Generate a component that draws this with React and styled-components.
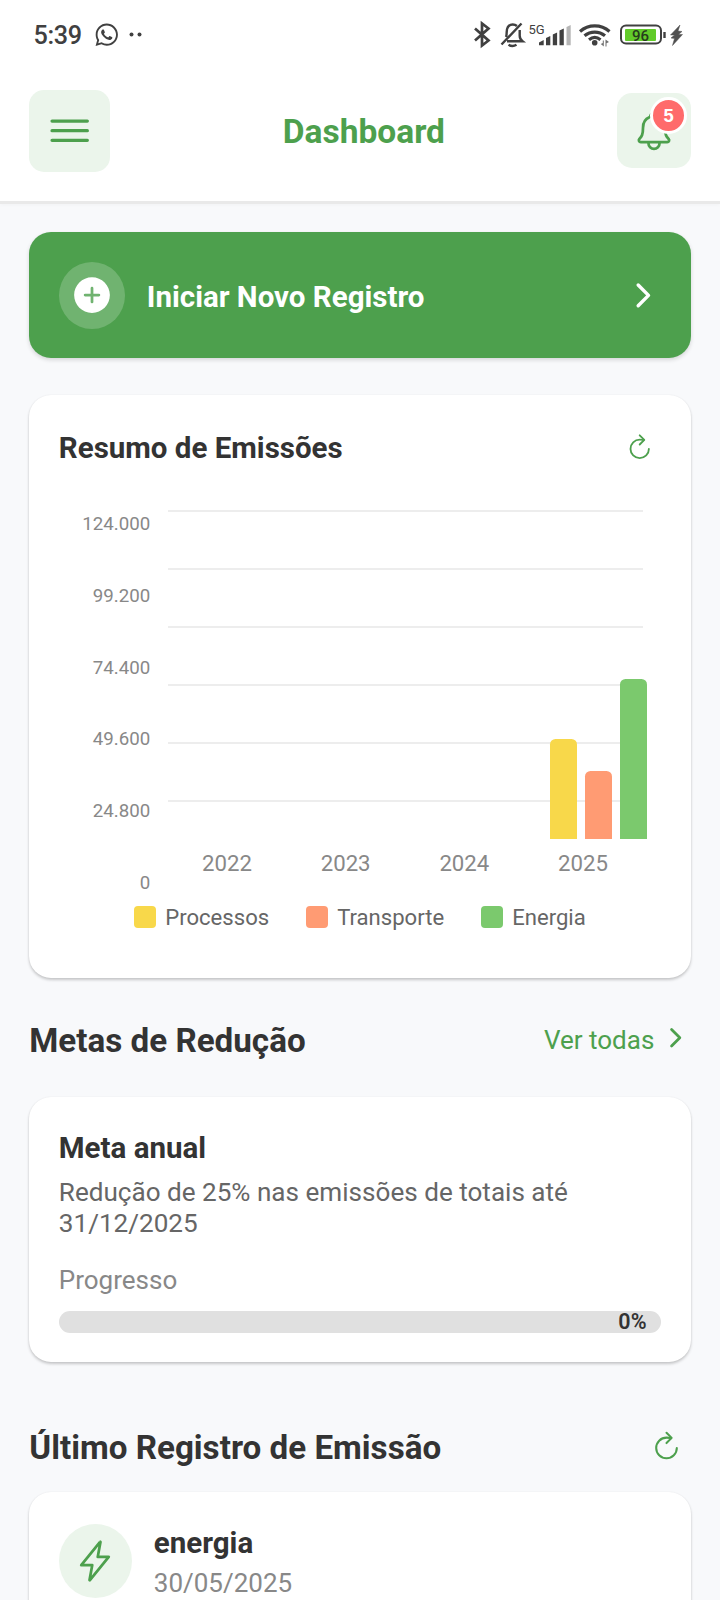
import React from "react";
import styled, { createGlobalStyle } from "styled-components";
import {
  IoMenuOutline,
  IoNotificationsOutline,
  IoAddCircle,
  IoChevronForward,
  IoRefreshOutline,
  IoFlashOutline,
} from "react-icons/io5";
import { FaWhatsapp } from "react-icons/fa";

const GREEN = "#4da04d";
const MINT = "#ebf5eb";

const GlobalStyle = createGlobalStyle`
  * { box-sizing: border-box; }
  body {
    margin: 0;
    background: #f8f9fb;
    font-family: Roboto, "Liberation Sans", sans-serif;
    color: #333;
  }
  svg { display: block; flex: none; }
  h1, h2, h3, p { margin: 0; }
`;

const Screen = styled.div`
  width: 720px;
  height: 1600px;
  overflow: hidden;
  background: #f8f9fb;
`;

const TopArea = styled.div`
  height: 204px;
  background: #fff;
  border-bottom: 3px solid #e9e9e9;
  box-shadow: 0 1px 4px rgba(0, 0, 0, 0.03);
`;

const StatusBar = styled.div`
  display: flex;
  justify-content: space-between;
  height: 70px;
  padding: 0 36px 0 33.5px;
  color: #404040;
`;

const StatusGroup = styled.div`
  display: flex;
  align-items: center;
  height: 70px;
`;

const Clock = styled.span`
  width: 60px;
  font-size: 25.2px;
  font-weight: 500;
  line-height: 70px;
  letter-spacing: -0.3px;
  padding-top: 2px;
`;

const Dots = styled.svg`
  margin-left: 10px;
`;

const Header = styled.header`
  display: flex;
  justify-content: space-between;
  align-items: center;
  height: 121px;
  padding: 0 29.5px 0 29.3px;
`;

const SoftButton = styled.button`
  position: relative;
  display: flex;
  align-items: center;
  justify-content: center;
  width: ${(p) => p.$w}px;
  height: ${(p) => p.$h}px;
  padding: 0;
  border: 0;
  border-radius: 15px;
  background: ${MINT};
  color: ${GREEN};
`;

const Badge = styled.span`
  position: absolute;
  top: 4px;
  right: 3.5px;
  width: 37px;
  height: 37px;
  border: 3.7px solid #fff;
  border-radius: 50%;
  background: #ff6b6b;
  color: #fff;
  font-size: 18.4px;
  font-weight: 700;
  line-height: 31px;
  text-align: center;
`;

const ScreenTitle = styled.h1`
  padding: 3px 0 0 1px;
  font-size: 33.5px;
  line-height: 40px;
  font-weight: 700;
  color: ${GREEN};
`;

const Content = styled.main`
  padding: 28px 29.3px 0;
`;

const NewRecord = styled.button`
  display: flex;
  align-items: center;
  width: 661.4px;
  height: 126px;
  padding: 0 29.5px;
  border: 0;
  border-radius: 22px;
  background: ${GREEN};
  color: #fff;
  font-family: inherit;
  text-align: left;
  box-shadow: 0 2px 4px rgba(0, 0, 0, 0.14);
`;

const NewRecordIcon = styled.span`
  display: flex;
  align-items: center;
  justify-content: center;
  width: 66px;
  height: 67px;
  border-radius: 50%;
  background: rgba(255, 255, 255, 0.2);
`;

const NewRecordLabel = styled.span`
  flex: 1;
  padding: 3px 0 0 22px;
  font-size: 29.5px;
  line-height: 36px;
  font-weight: 700;
`;

const Card = styled.section`
  height: ${(p) => p.$h}px;
  margin-top: ${(p) => p.$top}px;
  padding: ${(p) => p.$pad}px 29.5px 0;
  border-radius: 22px;
  background: #fff;
  box-shadow: 0 2px 3px rgba(0, 0, 0, 0.2), 0 0 2px rgba(0, 0, 0, 0.06);
`;

const CardHeader = styled.div`
  display: flex;
  justify-content: space-between;
  align-items: center;
  height: 40px;
  padding-right: 7px;
  color: ${GREEN};
`;

const CardTitle = styled.h3`
  padding-top: ${(p) => p.$drop || 0}px;
  font-size: 29.5px;
  line-height: 36px;
  font-weight: 700;
  color: #333;
`;

const Chart = styled.div`
  display: flex;
  height: 387px;
  margin-top: 43px;
`;

const YAxis = styled.div`
  display: flex;
  flex-direction: column;
  justify-content: space-between;
  width: 91.5px;
  height: 384px;
  padding-top: 3px;
  font-size: 18.7px;
  line-height: 22px;
  text-align: right;
  color: #888;
`;

const PlotColumn = styled.div`
  width: 478px;
  margin-left: 18px;
`;

const Plot = styled.div`
  position: relative;
  height: 329px;
`;

const GridLines = styled.div`
  display: flex;
  flex-direction: column;
  gap: 56px;
  width: 475px;
`;

const GridLine = styled.div`
  height: 2px;
  background: #ededed;
`;

const Bars = styled.div`
  position: absolute;
  right: -1px;
  bottom: 0;
  display: flex;
  align-items: flex-end;
  gap: 7.7px;
`;

const Bar = styled.div`
  width: 27.4px;
  border-radius: 5.5px 5.5px 0 0;
`;

const XAxis = styled.div`
  display: grid;
  grid-template-columns: repeat(4, 118.7px);
  width: 475px;
  margin: 10px 0 0 -0.7px;
  font-size: 22.2px;
  line-height: 28px;
  text-align: center;
  color: #888;
`;

const Legend = styled.div`
  display: flex;
  justify-content: center;
  gap: 37px;
  height: 26px;
  margin-top: 7px;
`;

const LegendItem = styled.div`
  display: flex;
  align-items: center;
  gap: 9px;
  font-size: 22.1px;
  line-height: 26px;
  color: #666;
`;

const Swatch = styled.span`
  width: 22px;
  height: 22px;
  border-radius: 4px;
`;

const LegendText = styled.span`
  padding-top: 0;
`;

const SectionHeader = styled.div`
  display: flex;
  align-items: center;
  justify-content: space-between;
  height: 44px;
  margin-top: ${(p) => p.$top}px;
  padding-right: ${(p) => p.$right}px;
  color: ${GREEN};

  svg {
    margin-bottom: 4px;
  }
`;

const SectionTitle = styled.h2`
  font-size: 33.2px;
  line-height: 43px;
  font-weight: 700;
  color: #333;
`;

const SeeAll = styled.a`
  display: flex;
  align-items: center;
  gap: 7px;
  font-size: 26px;
  line-height: 40px;
  padding-bottom: 1px;
`;

const GoalText = styled.p`
  margin-top: 11px;
  font-size: 26.1px;
  line-height: 31px;
  color: #666;
`;

const ProgressLabel = styled.p`
  margin-top: 26px;
  font-size: 26px;
  line-height: 31px;
  color: #888;
`;

const ProgressTrack = styled.div`
  height: 22px;
  margin-top: 15px;
  padding-right: 14.7px;
  border-radius: 11px;
  background: #e0e0e0;
  font-size: 21.5px;
  line-height: 21px;
  font-weight: 600;
  text-align: right;
`;

const Entry = styled.div`
  display: flex;
  gap: 22px;
`;

const EntryIcon = styled.span`
  display: flex;
  align-items: center;
  justify-content: center;
  width: 73px;
  height: 74px;
  border-radius: 50%;
  background: ${MINT};
  color: ${GREEN};
`;

const EntryDate = styled.p`
  margin-top: 7px;
  font-size: 26px;
  line-height: 31px;
  color: #888;
`;

const EntryBody = styled.div`
  padding-top: 1px;
`;

const StatusIcons = () => (
  <svg width="212" height="30" viewBox="472 20 212 30" fill="none" stroke="#404040">
    <path d="M475 28.500l13.500 12-6.500 5v-22l6.500 5-13.500 12" strokeWidth="2.700" />
    <path
      d="M521.500 23.500l-20 21M506 37c.6-1.500.7-3 .7-5 .2-5 2.600-7.500 6-7.500 1.800 0 3.200.600 4.200 1.500M507 41.300h15.500c-2-1.500-2.800-3-2.800-5.500V30"
      strokeWidth="2.400"
    />
    <path d="M508.500 44.800q4 2.400 8 0" strokeWidth="2.400" />
    <text x="528.500" y="33.500" fontSize="13" fill="#404040" stroke="none">5G</text>
    <g stroke="none" fill="#404040">
      <path d="M539 42.500l4.700-2.500v5.200h-4.700zM546 38l4.300-2v9.200h-4.300zM552.800 34.500l4.300-2v12.700h-4.300zM559.500 30.500l4.300-2v16.700h-4.300z" />
      <path d="M566.500 27l4.200-2v20.200h-4.200z" fill="#b5b5b5" />
      <circle cx="594.700" cy="42.800" r="2.800" />
      <path d="M605.500 39.500l3.500 2.500-2.500 1.200v3.300h-1zM603.800 46.500l-3-2.500 2-1v-2.500h1z" opacity=".75" />
    </g>
    <path d="M580 31.500c8.500-7.400 21-7.400 29.500 0M584.500 35.800c6-5 14.500-5 20.500 0M589 39.700c3.500-2.800 8-2.800 11.500 0" strokeWidth="3.200" />
    <rect x="621" y="25.500" width="40" height="18" rx="5" strokeWidth="2" />
    <rect x="625" y="29" width="31" height="12" rx="1" fill="#62cb2a" stroke="none" />
    <path d="M664.500 32v6" strokeWidth="2.400" />
    <text x="632" y="40.500" fontSize="15" fontWeight="500" fill="#263c1c" stroke="none">96</text>
    <path d="M680 25l-9.500 10h4l-3.500 3 3.500.500-2 7 10-11h-4l3.500-3-4-.500z" fill="#505050" stroke="#505050" strokeWidth=".5" />
  </svg>
);

const LEVELS = ["124.000", "99.200", "74.400", "49.600", "24.800", "0"];
const YEARS = ["2022", "2023", "2024", "2025"];
const SERIES = [
  { name: "Processos", color: "#f8d84a", height: 100 },
  { name: "Transporte", color: "#ff9b73", height: 68.5 },
  { name: "Energia", color: "#7bc96d", height: 160 },
];

export default function App() {
  return (
    <Screen>
      <GlobalStyle />
      <TopArea>
        <StatusBar>
          <StatusGroup>
            <Clock>5:39</Clock>
            <FaWhatsapp size={25.500} />
            <Dots width="14" height="6" viewBox="0 0 14 6" fill="#404040">
              <circle cx="2.500" cy="2.500" r="2" />
              <circle cx="10.500" cy="2.500" r="2" />
            </Dots>
          </StatusGroup>
          <StatusGroup>
            <StatusIcons />
          </StatusGroup>
        </StatusBar>
        <Header>
          <SoftButton $w={80.5} $h={82}>
            <IoMenuOutline size={51.400} />
          </SoftButton>
          <ScreenTitle>Dashboard</ScreenTitle>
          <SoftButton $w={73.5} $h={74.500}>
            <IoNotificationsOutline size={44} />
            <Badge>5</Badge>
          </SoftButton>
        </Header>
      </TopArea>

      <Content>
        <NewRecord>
          <NewRecordIcon>
            <IoAddCircle size={44} />
          </NewRecordIcon>
          <NewRecordLabel>Iniciar Novo Registro</NewRecordLabel>
          <IoChevronForward size={36.700} />
        </NewRecord>

        <Card $h={583} $top={37} $pad={32}>
          <CardHeader>
            <CardTitle $drop={2}>Resumo de Emissões</CardTitle>
            <IoRefreshOutline size={29.400} />
          </CardHeader>
          <Chart>
            <YAxis>
              {LEVELS.map((level) => (
                <span key={level}>{level}</span>
              ))}
            </YAxis>
            <PlotColumn>
              <Plot>
                <GridLines>
                  {LEVELS.map((level) => (
                    <GridLine key={level} />
                  ))}
                </GridLines>
                <Bars>
                  {SERIES.map((s) => (
                    <Bar key={s.name} style={{ height: s.height, background: s.color }} />
                  ))}
                </Bars>
              </Plot>
              <XAxis>
                {YEARS.map((year) => (
                  <span key={year}>{year}</span>
                ))}
              </XAxis>
            </PlotColumn>
          </Chart>
          <Legend>
            {SERIES.map((s) => (
              <LegendItem key={s.name}>
                <Swatch style={{ background: s.color }} />
                <LegendText>{s.name}</LegendText>
              </LegendItem>
            ))}
          </Legend>
        </Card>

        <SectionHeader $top={40} $right={0}>
          <SectionTitle>Metas de Redução</SectionTitle>
          <SeeAll>
            Ver todas
            <IoChevronForward size={29.400} />
          </SeeAll>
        </SectionHeader>

        <Card $h={265} $top={35} $pad={33}>
          <CardTitle>Meta anual</CardTitle>
          <GoalText>Redução de 25% nas emissões de totais até 31/12/2025</GoalText>
          <ProgressLabel>Progresso</ProgressLabel>
          <ProgressTrack>0%</ProgressTrack>
        </Card>

        <SectionHeader $top={63} $right={7.500}>
          <SectionTitle>Último Registro de Emissão</SectionTitle>
          <IoRefreshOutline size={33} />
        </SectionHeader>

        <Card $h={300} $top={23} $pad={31.500}>
          <Entry>
            <EntryIcon>
              <IoFlashOutline size={44} />
            </EntryIcon>
            <EntryBody>
              <CardTitle>energia</CardTitle>
              <EntryDate>30/05/2025</EntryDate>
            </EntryBody>
          </Entry>
        </Card>
      </Content>
    </Screen>
  );
}
